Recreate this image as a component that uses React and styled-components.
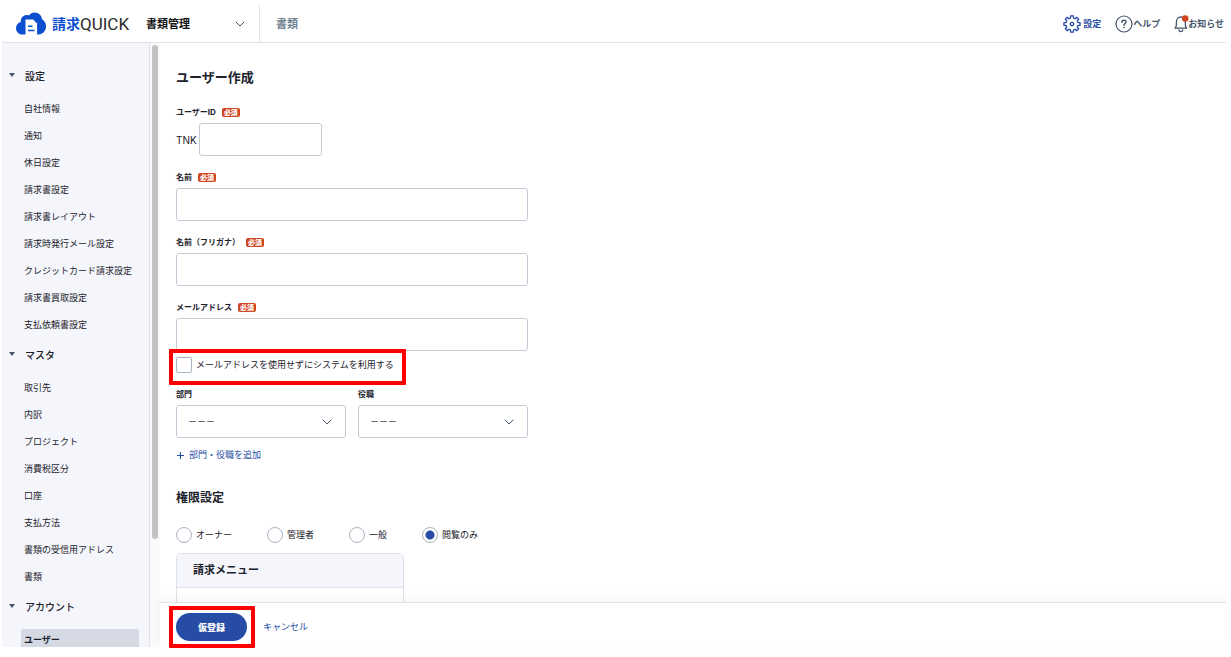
import React from "react";
import styled, { createGlobalStyle, css } from "styled-components";

const c = {
  ink: "#1c222b",
  slate: "#45566b",
  blue: "#264ca5",
  line: "#dfe2ea",
  field: "#c3cad6",
  panel: "#f5f6fb",
  red: "#ff0000",
  badge: "#cf4520",
};

const GlobalStyle = createGlobalStyle`
  *, *::before, *::after { box-sizing: border-box; }
  body {
    margin: 0;
    background: #fff;
    color: ${c.ink};
    font-family: Inter, "Noto Sans CJK JP", sans-serif;
    font-size: 9px;
  }
  h1, h2, h3, ul, fieldset { margin: 0; padding: 0; border: 0; }
  ul { list-style: none; }
  a { color: inherit; text-decoration: none; }
  button, input, select { font: inherit; color: inherit; }
`;

const Shell = styled.div`
  height: 100vh;
  padding: 0 5px 10px 2px;
  display: flex;
  flex-direction: column;
`;

const Header = styled.header`
  flex: none;
  height: 43px;
  display: flex;
  align-items: center;
  border-bottom: 1px solid ${c.line};
  padding: 5px 2px 0 14px;
`;

const Logo = styled.a`
  display: flex;
  align-items: center;
  gap: 6px;
  line-height: 20px;
  font-size: 14px;
  font-weight: 700;
  color: #0b4fd0;
`;

const LogoText = styled.span`
  display: flex;
  width: 78px;
`;

const LogoLatin = styled.span`
  font-family: Roboto, sans-serif;
  font-size: 17px;
  font-weight: 400;
  color: #2b2b2b;
`;

const ModePicker = styled.div`
  align-self: stretch;
  width: 130px;
  padding: 0 12px 0 16px;
  display: grid;
  align-items: center;
  border-right: 1px solid ${c.line};
  svg { grid-area: 1 / 1; justify-self: end; pointer-events: none; margin-right: 2px; }
`;

const ModeSelect = styled.select`
  grid-area: 1 / 1;
  appearance: none;
  border: 0;
  padding: 0;
  background: transparent;
  font-size: 11px;
  line-height: 20px;
  font-weight: 700;
  color: #111;
`;

const HeaderTab = styled.a`
  margin-left: 16px;
  font-size: 11px;
  line-height: 20px;
  font-weight: 700;
  color: #6f8090;
`;

const Tools = styled.nav`
  margin-left: auto;
  display: flex;
  align-items: center;
  gap: 14px;
`;

const Tool = styled.a`
  display: flex;
  align-items: center;
  gap: ${(p) => p.$gap || 0}px;
  font-weight: 700;
  line-height: 18px;
  color: ${(p) => (p.$active ? c.blue : c.slate)};
  svg { flex: none; }
`;

const Body = styled.div`
  flex: 1;
  min-height: 0;
  display: flex;
`;

const Sidebar = styled.nav`
  flex: none;
  width: 148px;
  overflow: hidden;
  background: ${c.panel};
  border-right: 1px solid ${c.line};
  padding: 23px 10px 0 7px;
`;

const Track = styled.div`
  flex: none;
  width: 10px;
  background: #fafafa;
  padding: 2px 2px 0;
`;

const Thumb = styled.div`
  height: 82%;
  border-radius: 3px;
  background: #c1c1c1;
`;

const Group = styled.section`
  & + & { margin-top: 7px; }
`;

const GroupTitle = styled.h3`
  display: flex;
  align-items: center;
  gap: 10px;
  font-size: 10px;
  line-height: 20px;
  font-weight: 500;
  &::before {
    content: "";
    border: 3px solid transparent;
    border-top: 4px solid ${c.slate};
    border-bottom: 0;
    margin-bottom: 3px;
  }
`;

const GroupList = styled.ul`
  display: flow-root;
  margin-top: 9px;
  padding-left: 12px;
`;

const GroupLink = styled.a`
  display: block;
  padding: 3px;
  line-height: 21px;
  white-space: nowrap;
  ${(p) =>
    p.$current
      ? css`
          margin: 3px 0;
          padding: 0 3px;
          border-radius: 3px;
          background: #d5d9e3;
          font-weight: 700;
        `
      : ""}
`;

const Main = styled.main`
  flex: 1;
  min-width: 0;
  display: flex;
  flex-direction: column;
`;

const Form = styled.form`
  flex: 1;
  min-height: 0;
  overflow: hidden;
  padding: 24px 16px 0;
`;

const Column = styled.div`
  max-width: 352px;
`;

const PageTitle = styled.h1`
  font-size: 13px;
  line-height: 20px;
  font-weight: 700;
  margin-bottom: 17px;
`;

const Fields = styled.div`
  display: flex;
  flex-direction: column;
  gap: 13px;
`;

const Label = styled.label`
  display: flex;
  align-items: center;
  gap: 6px;
  font-size: 8px;
  line-height: 16px;
  font-weight: 700;
  margin-bottom: 3px;
`;

const Badge = styled.span`
  padding: 0 2px;
  border-radius: 2px;
  background: ${c.badge};
  color: #fff;
  font-size: 7px;
  line-height: 9px;
  font-weight: 900;
`;

const Prefixed = styled.div`
  display: flex;
  align-items: center;
  gap: 2px;
  font-size: 10px;
`;

const boxed = css`
  height: 33px;
  border: 1px solid ${c.field};
  border-radius: 3px;
  background: #fff;
`;

const TextInput = styled.input`
  ${boxed}
  width: ${(p) => (p.$short ? "123px" : "100%")};
  display: block;
  padding: 0 12px;
`;

const Marked = styled.div`
  position: relative;
  width: max-content;
  &::after {
    content: "";
    position: absolute;
    inset: ${(p) => p.$inset};
    border: 4px solid ${c.red};
    border-radius: 1px;
    pointer-events: none;
  }
`;

const NoMail = styled.div`
  margin-top: 6px;
`;

const Choice = styled.label`
  display: flex;
  align-items: center;
  gap: 4px;
  line-height: 16px;
`;

const Tick = styled.input`
  appearance: none;
  flex: none;
  width: 16px;
  height: 16px;
  margin: 0;
  background: #fff;
  border: 1px solid #a9b4c3;
  border-radius: ${(p) => (p.type === "radio" ? "50%" : "2px")};
  &:checked {
    background: radial-gradient(circle, ${c.blue} 4px, #fff 5px);
  }
`;

const Pair = styled.div`
  display: grid;
  grid-template-columns: 1fr 1fr;
  gap: 12px;
  margin-top: 13px;
`;

const SelectWrap = styled.div`
  display: grid;
  align-items: center;
  svg { grid-area: 1 / 1; justify-self: end; margin-right: 14px; pointer-events: none; }
`;

const Select = styled.select`
  ${boxed}
  grid-area: 1 / 1;
  appearance: none;
  width: 100%;
  padding: 0 11px;
`;

const AddButton = styled.button`
  display: flex;
  align-items: center;
  gap: 4px;
  margin-top: 9px;
  padding: 0;
  border: 0;
  background: none;
  line-height: 16px;
  color: ${c.blue};
`;

const SectionTitle = styled.h2`
  margin: 25px 0 19px;
  font-size: 12px;
  line-height: 20px;
  font-weight: 700;
`;

const Roles = styled.fieldset`
  display: flex;
  gap: 35px;
  white-space: nowrap;
`;

const MenuCard = styled.section`
  width: 228px;
  height: 120px;
  margin-top: 10px;
  border: 1px solid ${c.line};
  border-radius: 5px 5px 0 0;
`;

const MenuTitle = styled.h3`
  padding: 0 16px;
  background: ${c.panel};
  border-bottom: 1px solid ${c.line};
  border-radius: 4px 4px 0 0;
  font-size: 11px;
  line-height: 33px;
  font-weight: 700;
`;

const Footer = styled.footer`
  flex: none;
  height: 45px;
  display: flex;
  align-items: center;
  gap: 16px;
  padding: 4px 16px 0;
  border-top: 1px solid ${c.line};
  background: #fff;
  box-shadow: 0 -4px 10px rgba(0, 0, 0, 0.04);
`;

const Submit = styled.button`
  display: block;
  width: 71px;
  height: 28px;
  padding: 0;
  border: 0;
  border-radius: 14px;
  background: ${c.blue};
  color: #fff;
  font-weight: 900;
`;

const Cancel = styled.a`
  color: ${c.blue};
  line-height: 20px;
`;

const CloudMark = () => (
  <svg width="30" height="23" viewBox="0 0 30 23" aria-hidden="true">
    <path
      fill="#0b4fd0"
      d="M6.500 22.500C2.800 22.500 0 19.700 0 16.200c0-3 2-5.300 4.800-6.100C4.400 5.900 7.300 3 10.700 3c.9 0 1.600.1 2.300.4C14.300 1.400 16.400.4 18.600.4c4.200 0 7.200 3 7.400 6.900 2.400 1.200 4 3.900 4 7 0 4.600-3.200 8.200-7.400 8.200z"
    />
    <path fill="#fff" d="M9.500 7.600h7.600l4 3.900V23H9.500z" />
    <path stroke="#0b4fd0" strokeWidth="1.600" d="M12 14.200h4.500M12 18.500h6.500" />
  </svg>
);

const Chevron = () => (
  <svg width="10" height="10" viewBox="0 0 10 10" fill="none" stroke={c.slate} strokeLinecap="round" strokeLinejoin="round" aria-hidden="true">
    <path d="M1 3l4 4 4-4" />
  </svg>
);

const gearPath = (() => {
  const pts = [];
  for (let i = 0; i < 8; i += 1) {
    const mid = (i * Math.PI) / 4;
    [[-0.25, 6.1], [-0.17, 8.2], [0.17, 8.2], [0.25, 6.1]].forEach(([a, r]) => {
      pts.push(`${(9 + r * Math.sin(mid + a)).toFixed(2)} ${(9 - r * Math.cos(mid + a)).toFixed(2)}`);
    });
  }
  return `M${pts.join("L")}Z`;
})();

const GearIcon = () => (
  <svg width="18" height="18" viewBox="0 0 18 18" fill="none" stroke="currentColor" strokeWidth="1.300" strokeLinejoin="round" aria-hidden="true">
    <path d={gearPath} />
    <circle cx="9" cy="9" r="1.700" />
  </svg>
);

const HelpIcon = () => (
  <svg width="18" height="18" viewBox="0 0 18 18" fill="none" stroke="currentColor" strokeLinecap="round" aria-hidden="true">
    <circle cx="9" cy="9" r="8" strokeWidth="1.200" />
    <path strokeWidth="1.400" d="M6.900 7.200c0-1.200.9-2 2.100-2s2.100.8 2.100 1.900c0 1.500-2.100 1.600-2.100 3.100" />
    <circle cx="9" cy="12.600" r=".5" fill="currentColor" strokeWidth=".6" />
  </svg>
);

const BellIcon = () => (
  <svg width="14" height="18" viewBox="0 0 14 18" fill="none" stroke="currentColor" strokeWidth="1.300" strokeLinecap="round" strokeLinejoin="round" overflow="visible" aria-hidden="true">
    <path d="M1 13.200c1.200-1 1.400-2 1.400-3.600V6.800C2.400 4 4.300 2 6.800 2s4.500 2 4.500 4.800v2.800c0 1.600.3 2.600 1.500 3.600z" />
    <path d="M4.800 14.800c.2 1.200 1 1.800 2 1.800s1.800-.6 2-1.800" />
    <circle cx="11.200" cy="3.500" r="3.300" fill={c.badge} stroke="none" />
  </svg>
);

const PlusIcon = () => (
  <svg width="9" height="9" viewBox="0 0 9 9" stroke="currentColor" aria-hidden="true">
    <path d="M1 4.500h7M4.500 1v7" />
  </svg>
);

const groups = [
  {
    title: "設定",
    items: ["自社情報", "通知", "休日設定", "請求書設定", "請求書レイアウト", "請求時発行メール設定", "クレジットカード請求設定", "請求書買取設定", "支払依頼書設定"],
  },
  {
    title: "マスタ",
    items: ["取引先", "内訳", "プロジェクト", "消費税区分", "口座", "支払方法", "書類の受信用アドレス", "書類"],
  },
  { title: "アカウント", items: ["ユーザー"] },
];

const roles = ["オーナー", "管理者", "一般", "閲覧のみ"];

const RequiredField = ({ id, label, children }) => (
  <div>
    <Label htmlFor={id}>
      {label}
      <Badge>必須</Badge>
    </Label>
    {children || <TextInput id={id} type="text" />}
  </div>
);

const SelectField = ({ id, label }) => (
  <div>
    <Label htmlFor={id}>{label}</Label>
    <SelectWrap>
      <Select id={id}>
        <option>－－－</option>
      </Select>
      <Chevron />
    </SelectWrap>
  </div>
);

export default function App() {
  return (
    <Shell>
      <GlobalStyle />
      <Header>
        <Logo href="#home">
          <CloudMark />
          <LogoText>
            請求<LogoLatin>QUICK</LogoLatin>
          </LogoText>
        </Logo>
        <ModePicker>
          <ModeSelect aria-label="メニュー">
            <option>書類管理</option>
          </ModeSelect>
          <Chevron />
        </ModePicker>
        <HeaderTab href="#documents">書類</HeaderTab>
        <Tools>
          <Tool href="#settings" $active $gap={2}>
            <GearIcon />
            設定
          </Tool>
          <Tool href="#help">
            <HelpIcon />
            ヘルプ
          </Tool>
          <Tool href="#news">
            <BellIcon />
            お知らせ
          </Tool>
        </Tools>
      </Header>
      <Body>
        <Sidebar>
          {groups.map((g) => (
            <Group key={g.title}>
              <GroupTitle>{g.title}</GroupTitle>
              <GroupList>
                {g.items.map((item) => (
                  <li key={item}>
                    <GroupLink href="#item" $current={item === "ユーザー"}>
                      {item}
                    </GroupLink>
                  </li>
                ))}
              </GroupList>
            </Group>
          ))}
        </Sidebar>
        <Track>
          <Thumb />
        </Track>
        <Main>
          <Form id="user-form">
            <Column>
              <PageTitle>ユーザー作成</PageTitle>
              <Fields>
                <RequiredField id="user-id" label="ユーザーID">
                  <Prefixed>
                    TNK
                    <TextInput id="user-id" type="text" $short />
                  </Prefixed>
                </RequiredField>
                <RequiredField id="name" label="名前" />
                <RequiredField id="kana" label="名前（フリガナ）" />
                <RequiredField id="mail" label="メールアドレス">
                  <TextInput id="mail" type="email" />
                </RequiredField>
              </Fields>
              <NoMail>
                <Marked $inset="-8px -12px -12px -7px">
                  <Choice>
                    <Tick type="checkbox" />
                    メールアドレスを使用せずにシステムを利用する
                  </Choice>
                </Marked>
              </NoMail>
              <Pair>
                <SelectField id="dept" label="部門" />
                <SelectField id="post" label="役職" />
              </Pair>
              <AddButton type="button">
                <PlusIcon />
                部門・役職を追加
              </AddButton>
              <SectionTitle>権限設定</SectionTitle>
              <Roles aria-label="権限設定">
                {roles.map((r) => (
                  <Choice key={r}>
                    <Tick type="radio" name="role" defaultChecked={r === "閲覧のみ"} />
                    {r}
                  </Choice>
                ))}
              </Roles>
              <MenuCard>
                <MenuTitle>請求メニュー</MenuTitle>
              </MenuCard>
            </Column>
          </Form>
          <Footer>
            <Marked $inset="-7px -8px -7px -7px">
              <Submit type="submit" form="user-form">
                仮登録
              </Submit>
            </Marked>
            <Cancel href="#cancel">キャンセル</Cancel>
          </Footer>
        </Main>
      </Body>
    </Shell>
  );
}
